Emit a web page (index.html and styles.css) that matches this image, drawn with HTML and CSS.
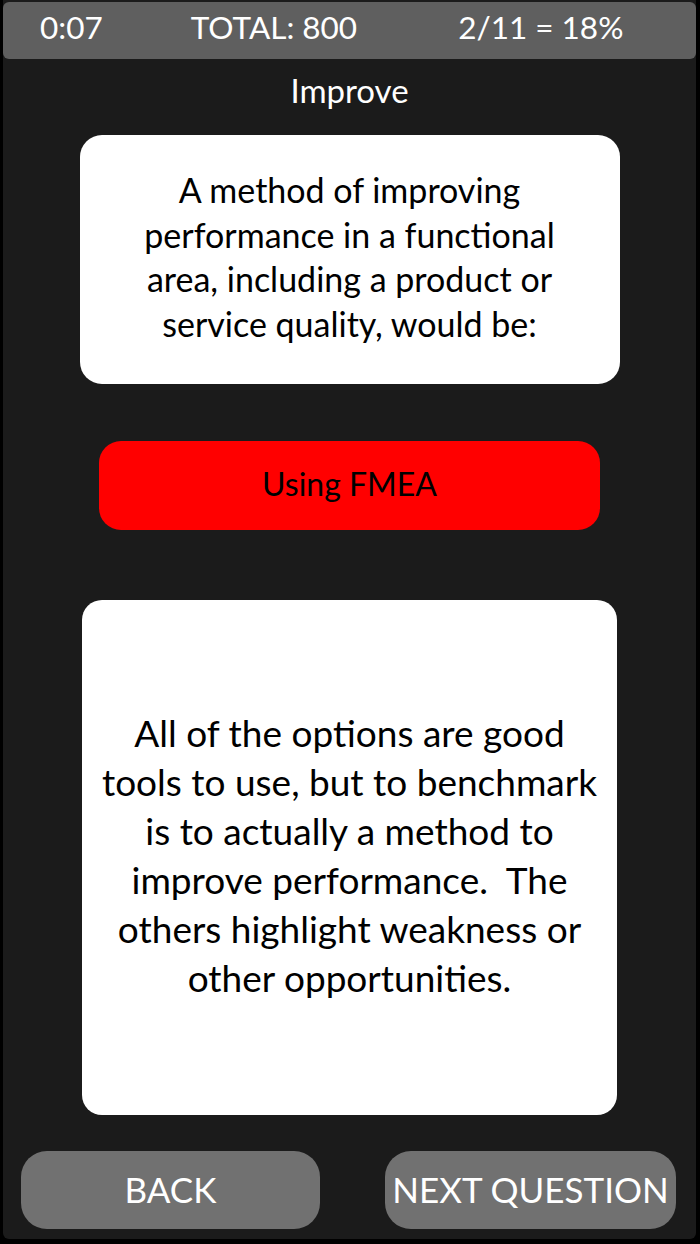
FILE: index.html
```html
<!DOCTYPE html>
<html lang="en">
<head>
<meta charset="utf-8">
<title>Improve</title>
<link rel="stylesheet" href="styles.css">
</head>
<body>
<div class="screen">
  <header class="topbar">
    <span class="stat stat-time">0:07</span>
    <span class="stat stat-total">TOTAL: 800</span>
    <span class="stat stat-score">2/11 = 18%</span>
  </header>
  <h1 class="title">Improve</h1>
  <section class="card question">
    <p>A method of improving<br>performance in a functional<br>area, including a product or<br>service quality, would be:</p>
  </section>
  <div class="answer wrong">Using FMEA</div>
  <section class="card explanation">
    <p>All of the options are good<br>tools to use, but to benchmark<br>is to actually a method to<br>improve performance.&nbsp; The<br>others highlight weakness or<br>other opportunities.</p>
  </section>
  <footer class="nav">
    <button class="navbtn back">BACK</button>
    <button class="navbtn next">NEXT QUESTION</button>
  </footer>
</div>
</body>
</html>
```
FILE: styles.css
```css
html, body {
  margin: 0;
  padding: 0;
  background: #000;
}
body {
  font-family: Lato, "Open Sans", sans-serif;
  width: 700px;
  height: 1244px;
  overflow: hidden;
}
.screen {
  margin: 0 4px 0 3px;
  height: 1239px;
  background: #1b1b1b;
  border-radius: 0 0 6px 6px;
  display: flex;
  flex-direction: column;
  align-items: center;
}
.topbar {
  margin-top: 2px;
  align-self: stretch;
  height: 57px;
  background: #5f5f5f;
  border-radius: 6px;
  display: flex;
  align-items: center;
  color: #fff;
  font-size: 31.5px;
  box-sizing: border-box;
  padding-left: 37px;
  padding-bottom: 8px;
}
.stat { white-space: nowrap; }
.stat-total { margin-left: 88px; }
.stat-score { margin-left: 101px; }
.title {
  margin: 0;
  height: 76px;
  line-height: 62px;
  color: #fff;
  font-weight: normal;
  font-size: 33px;
}
.card {
  background: #fff;
  color: #000;
  display: flex;
  align-items: center;
  justify-content: center;
  text-align: center;
}
.card p { margin: 0; }
.question {
  width: 540px;
  height: 249px;
  border-radius: 22px;
  font-size: 34px;
  line-height: 44.5px;
  box-sizing: border-box;
  padding-bottom: 5px;
}
.answer {
  margin-top: 57px;
  width: 501px;
  height: 89px;
  border-radius: 22px;
  display: flex;
  align-items: center;
  justify-content: center;
  font-size: 32px;
  color: #000;
  box-sizing: border-box;
  padding-bottom: 5px;
}
.answer.wrong { background: #ff0000; }
.explanation {
  margin-top: 70px;
  width: 535px;
  height: 515px;
  border-radius: 20px;
  font-size: 37px;
  line-height: 49px;
  box-sizing: border-box;
  padding-bottom: 5px;
}
.nav {
  margin-top: 36px;
  align-self: stretch;
  display: flex;
  padding-left: 18px;
}
.navbtn {
  height: 78px;
  background: #717171;
  border: none;
  border-radius: 26px;
  color: #fff;
  font-family: inherit;
  font-size: 35px;
  padding: 0 0 3px;
  white-space: nowrap;
}
.back { width: 299px; }
.next { width: 291px; margin-left: 65px; }
```
